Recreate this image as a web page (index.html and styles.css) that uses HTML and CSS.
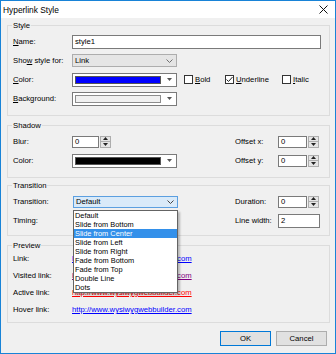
FILE: index.html
```html
<!DOCTYPE html>
<html lang="en">
<head>
  <meta charset="UTF-8" />
  <title>Hyperlink Style</title>
  <link rel="stylesheet" href="styles.css">
</head>
<body>
  <div class="window">
    <div class="titlebar">
      <span class="title">Hyperlink Style</span>
      <svg class="close" width="9" height="9" viewBox="0 0 9 9"><path d="M0.5 0.5 L8.5 8.5 M8.5 0.5 L0.5 8.5" stroke="#111" stroke-width="1" fill="none"/></svg>
    </div>
    <div class="content">
      <div class="group group-style">
        <div class="group-title"><span>Style</span></div>
        <div class="row">
          <span class="lbl"><u>N</u>ame:</span>
          <div class="textbox name-box">style1</div>
        </div>
        <div class="row">
          <span class="lbl">Sho<u>w</u> style for:</span>
          <div class="combo combo-ro">
            <span>Link</span>
            <svg width="7" height="4" viewBox="0 0 7 4"><path d="M0.5 0.5 L3.5 3.5 L6.5 0.5" stroke="#707070" fill="none"/></svg>
          </div>
        </div>
        <div class="row">
          <span class="lbl"><u>C</u>olor:</span>
          <div class="combo combo-color">
            <span class="swatch swatch-blue"></span>
            <svg width="5" height="3" viewBox="0 0 5 3"><path d="M0 0 L5 0 L2.5 3 Z" fill="#555"/></svg>
          </div>
          <div class="checks">
            <label class="check check-bold"><span class="box"></span><span><u>B</u>old</span></label>
            <label class="check check-under"><span class="box"><svg width="7" height="7" viewBox="0 0 7 7"><path d="M0.5 3.5 L2.5 5.5 L6.5 1" stroke="#222" fill="none"/></svg></span><span><u>U</u>nderline</span></label>
            <label class="check"><span class="box"></span><span><u>I</u>talic</span></label>
          </div>
        </div>
        <div class="row">
          <span class="lbl"><u>B</u>ackground:</span>
          <div class="combo combo-color">
            <span class="swatch swatch-light"></span>
            <svg width="5" height="3" viewBox="0 0 5 3"><path d="M0 0 L5 0 L2.5 3 Z" fill="#555"/></svg>
          </div>
        </div>
      </div>

      <div class="group group-shadow">
        <div class="group-title"><span>Shadow</span></div>
        <div class="row">
          <div class="col-left">
            <span class="lbl">Blur:</span>
            <div class="spin spin-sm">
              <div class="spin-text">0</div>
              <div class="spin-btns">
                <span><svg width="5" height="3" viewBox="0 0 5 3"><path d="M0 3 L5 3 L2.5 0 Z" fill="#222"/></svg></span>
                <span><svg width="5" height="3" viewBox="0 0 5 3"><path d="M0 0 L5 0 L2.5 3 Z" fill="#222"/></svg></span>
              </div>
            </div>
          </div>
          <span class="lbl-right">Offset x:</span>
          <div class="spin">
            <div class="spin-text">0</div>
            <div class="spin-btns">
              <span><svg width="5" height="3" viewBox="0 0 5 3"><path d="M0 3 L5 3 L2.5 0 Z" fill="#222"/></svg></span>
              <span><svg width="5" height="3" viewBox="0 0 5 3"><path d="M0 0 L5 0 L2.5 3 Z" fill="#222"/></svg></span>
            </div>
          </div>
        </div>
        <div class="row">
          <div class="col-left">
            <span class="lbl">Color:</span>
            <div class="combo combo-color">
              <span class="swatch swatch-black"></span>
              <svg width="5" height="3" viewBox="0 0 5 3"><path d="M0 0 L5 0 L2.5 3 Z" fill="#555"/></svg>
            </div>
          </div>
          <span class="lbl-right">Offset y:</span>
          <div class="spin">
            <div class="spin-text">0</div>
            <div class="spin-btns">
              <span><svg width="5" height="3" viewBox="0 0 5 3"><path d="M0 3 L5 3 L2.5 0 Z" fill="#222"/></svg></span>
              <span><svg width="5" height="3" viewBox="0 0 5 3"><path d="M0 0 L5 0 L2.5 3 Z" fill="#222"/></svg></span>
            </div>
          </div>
        </div>
      </div>

      <div class="group group-transition">
        <div class="group-title"><span>Transition</span></div>
        <div class="row">
          <div class="col-left">
            <span class="lbl">Transition:</span>
            <div class="combo combo-open">
              <span>Default</span>
              <svg width="7" height="4" viewBox="0 0 7 4"><path d="M0.5 0.5 L3.5 3.5 L6.5 0.5" stroke="#444" fill="none"/></svg>
              <div class="dropdown">
                <div>Default</div>
                <div>Slide from Bottom</div>
                <div class="sel">Slide from Center</div>
                <div>Slide from Left</div>
                <div>Slide from Right</div>
                <div>Fade from Bottom</div>
                <div>Fade from Top</div>
                <div>Double Line</div>
                <div>Dots</div>
              </div>
            </div>
          </div>
          <span class="lbl-right">Duration:</span>
          <div class="spin">
            <div class="spin-text">0</div>
            <div class="spin-btns">
              <span><svg width="5" height="3" viewBox="0 0 5 3"><path d="M0 3 L5 3 L2.5 0 Z" fill="#222"/></svg></span>
              <span><svg width="5" height="3" viewBox="0 0 5 3"><path d="M0 0 L5 0 L2.5 3 Z" fill="#222"/></svg></span>
            </div>
          </div>
        </div>
        <div class="row">
          <div class="col-left">
            <span class="lbl">Timing:</span>
          </div>
          <span class="lbl-right">Line width:</span>
          <div class="textbox line-box">2</div>
        </div>
      </div>

      <div class="group group-preview">
        <div class="group-title"><span>Preview</span></div>
        <div class="row row-preview">
          <span class="lbl">Link:</span>
          <span class="link link-normal">http://www.wysiwygwebbuilder.com</span>
        </div>
        <div class="row row-preview">
          <span class="lbl">Visited link:</span>
          <span class="link link-visited">http://www.wysiwygwebbuilder.com</span>
        </div>
        <div class="row row-preview">
          <span class="lbl">Active link:</span>
          <span class="link link-active">http://www.wysiwygwebbuilder.com</span>
        </div>
        <div class="row row-preview">
          <span class="lbl">Hover link:</span>
          <span class="link link-normal">http://www.wysiwygwebbuilder.com</span>
        </div>
      </div>

      <div class="buttons">
        <button class="button button-default">OK</button>
        <button class="button">Cancel</button>
      </div>
    </div>
  </div>
</body>
</html>
```

FILE: styles.css
```css
body {
  margin: 0;
  font-family: 'Liberation Sans', Arial, sans-serif;
  font-size: 7.7px;
  color: #000000;
  background-color: #ffffff;
}
.window {
  width: 336px;
  height: 354px;
  box-sizing: border-box;
  border: 1px solid #1883d7;
  background-color: #f0f0f0;
}
.titlebar {
  height: 17px;
  background-color: #ffffff;
  display: flex;
  align-items: center;
  justify-content: space-between;
  padding: 0 7px 0 2px;
}
.title {
  font-size: 8.4px;
}
.close {
  display: block;
}
.content {
  padding: 7px 5px 0 6px;
}
.group {
  border: 1px solid #dcdcdc;
  padding: 0 5px 7px 5px;
}
.group-title {
  height: 12px;
  line-height: 12px;
  margin-top: -6px;
  margin-left: -1px;
}
.group-title span {
  background-color: #f0f0f0;
  padding: 0 1px;
}
.group-shadow {
  margin-top: 9px;
}
.group-transition {
  margin-top: 7px;
  padding-bottom: 5px;
}
.group-preview {
  margin-top: 9px;
  padding-bottom: 4px;
}
.group-preview .group-title {
  margin-bottom: -2px;
}
.row {
  display: flex;
  align-items: center;
  height: 19px;
}
.row-preview {
  height: 17px;
}
.lbl {
  width: 59px;
  flex: none;
  white-space: nowrap;
}
.col-left {
  width: 222px;
  flex: none;
  display: flex;
  align-items: center;
}
.lbl-right {
  width: 43px;
  flex: none;
  white-space: nowrap;
}
.textbox {
  height: 14px;
  box-sizing: border-box;
  border: 1px solid #7a7a7a;
  background-color: #ffffff;
  padding-left: 2px;
  line-height: 12px;
}
.name-box {
  width: 249px;
}
.line-box {
  width: 42px;
}
.combo {
  position: relative;
  width: 105px;
  height: 13px;
  box-sizing: border-box;
  border: 1px solid #7a7a7a;
  background-color: #ffffff;
  display: flex;
  align-items: center;
  justify-content: space-between;
  padding: 0 3px 0 2px;
}
.combo svg {
  display: block;
}
.combo-ro {
  background-color: #e5e5e5;
  border-color: #adadad;
}
.combo-color {
  height: 14px;
  padding-right: 4px;
}
.combo-open {
  background-color: #d9eaf9;
  border-color: #5b9fe0;
  height: 12px;
  margin-left: 1px;
  padding-left: 2px;
}
.swatch {
  width: 86px;
  height: 8px;
  box-sizing: border-box;
  border: 1px solid #555555;
}
.swatch-blue {
  background-color: #0000ff;
}
.swatch-black {
  background-color: #000000;
}
.swatch-light {
  background-color: #f0f0f0;
  border-color: #8c8c8c;
}
.checks {
  display: flex;
  margin-left: 7px;
}
.check {
  display: flex;
  align-items: center;
  gap: 2px;
}
.check-bold {
  width: 41px;
}
.check-under {
  width: 57px;
}
.box {
  width: 9px;
  height: 9px;
  box-sizing: border-box;
  border: 1px solid #333333;
  background-color: #ffffff;
  display: flex;
  align-items: center;
  justify-content: center;
}
.box svg {
  display: block;
}
.spin {
  display: flex;
  width: 41px;
  height: 12px;
}
.spin-sm {
  width: 39px;
}
.spin-text {
  flex: 1;
  box-sizing: border-box;
  border: 1px solid #7a7a7a;
  background-color: #ffffff;
  padding-left: 2px;
  line-height: 10px;
}
.spin-btns {
  width: 11px;
  box-sizing: border-box;
  border: 1px solid #adadad;
  margin-left: 1px;
  background-color: #e5e5e5;
  display: flex;
  flex-direction: column;
}
.spin-btns span {
  flex: 1;
  display: flex;
  align-items: center;
  justify-content: center;
}
.spin-btns span + span {
  border-top: 1px solid #adadad;
}
.spin-btns svg {
  display: block;
}
.dropdown {
  position: absolute;
  left: -1px;
  top: 13px;
  width: 105px;
  box-sizing: border-box;
  border: 1px solid #646464;
  background-color: #ffffff;
  box-shadow: 2px 2px 2px rgba(0, 0, 0, 0.25);
  font-size: 7.4px;
  color: #000000;
  z-index: 2;
}
.dropdown div {
  height: 9px;
  line-height: 9px;
  padding-left: 1px;
  white-space: nowrap;
}
.dropdown .sel {
  background-color: #3390ea;
  color: #ffffff;
}
.link {
  text-decoration: underline;
  white-space: nowrap;
}
.link-normal {
  color: #0000ff;
}
.link-visited {
  color: #800080;
}
.link-active {
  color: #ff0000;
}
.buttons {
  display: flex;
  justify-content: flex-end;
  gap: 5px;
  margin-top: 8px;
  padding-right: 3px;
}
.button {
  width: 51px;
  height: 15px;
  padding: 0;
  font-family: inherit;
  font-size: 7.7px;
  color: #000000;
  background-color: #e1e1e1;
  border: 1px solid #adadad;
}
.button-default {
  border-color: #0078d7;
}
```
